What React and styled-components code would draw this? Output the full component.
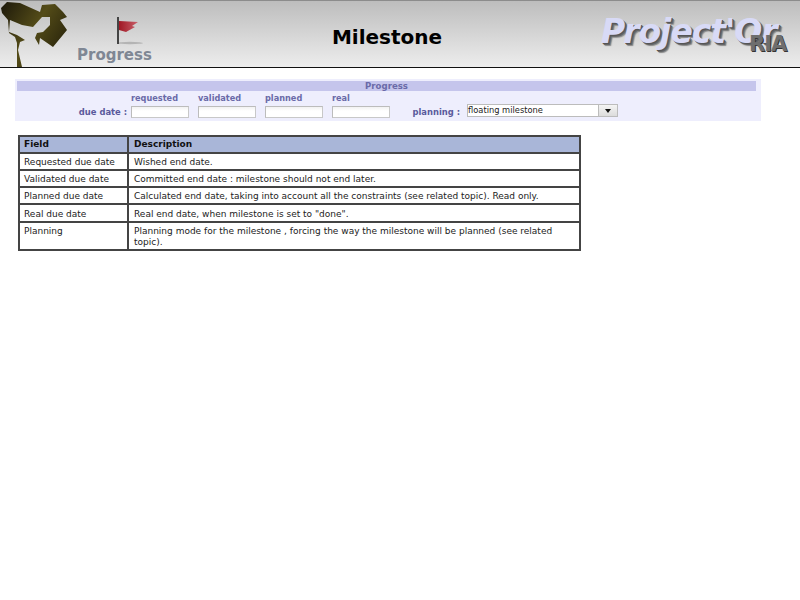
import React from "react";
import styled, { createGlobalStyle } from "styled-components";

const Global = createGlobalStyle`
  html, body { margin: 0; padding: 0; background: #fff; }
  body { font-family: "DejaVu Sans", Verdana, sans-serif; }
`;
const Page = styled.div`
  width: 800px; height: 600px; overflow: hidden; display: flex; flex-direction: column;
`;
const Header = styled.header`
  height: 66px; box-sizing: content-box; flex: none;
  border-top: 1px solid #8c8c8c; border-bottom: 1px solid #111;
  display: grid; grid-template-columns: 70px 100px 1fr 210px;
  background: linear-gradient(#bdbdbd, #ededed);
`;
const Camera = styled.svg` width: 70px; height: 67px; display: block; margin-top: -1px; `;
const Section = styled.div`
  display: flex; flex-direction: column; align-items: flex-start;
`;
const FlagIcon = styled.svg` width: 30px; height: 30px; margin-top: 14px; margin-left: 46px; display: block; `;
const SectionName = styled.div`
  font: bold 15px "DejaVu Sans", sans-serif; color: #7f8794; line-height: 17px; margin: 2px 0 0 7px;
`;
const Title = styled.h1`
  margin: 0; text-align: center; font: bold 20px "DejaVu Sans", sans-serif; color: #000;
  line-height: 26px; padding-top: 23px; padding-left: 14px;
`;
const Logo = styled.div`
  position: relative; padding: 11px 0 0 11px;
`;
const LogoMain = styled.div`
  font: italic bold 33px "DejaVu Sans", sans-serif; letter-spacing: -1px; line-height: 40px;
  color: #d8daf6;
  text-shadow: 1px 1px 0 #555, 2px 2px 0 #666, 3px 3px 1px #888; white-space: nowrap;
`;
const LogoBadge = styled.div`
  position: absolute; left: 159px; top: 32px; font: bold 21px "DejaVu Sans", sans-serif; color: #6e6e6e;
  letter-spacing: -1px; text-shadow: 1px 1px 0 #333; line-height: 22px;
`;
const Panel = styled.section`
  margin: 11px 0 0 15px; width: 746px; height: 42px; box-sizing: border-box; background: #eeeefd; padding-top: 2px; padding-left: 2px;
`;
const PanelTitle = styled.div`
  width: 739px; height: 10px; background: #c5c5ec; color: #6a6aa8; text-align: center;
  font: bold 8.6px/11px "DejaVu Sans", sans-serif;
`;
const FormRow = styled.div`
  display: flex; align-items: flex-start; padding-top: 1px;
`;
const RowLabel = styled.label`
  width: 110px; padding-top: 15px; text-align: right; color: #5a5a9c; font: bold 8.4px/11px "DejaVu Sans", sans-serif; white-space: nowrap;
`;
const DateCol = styled.div`
  width: 67px; margin-left: ${p => p.$first ? "4px" : "0"};
`;
const DateHead = styled.div`
  color: #6a6aa8; font: bold 8.2px/12px "DejaVu Sans", sans-serif; height: 12px;
`;
const DateInput = styled.div`
  width: 56px; height: 10px; background: linear-gradient(#f2f2f2, #fff 40%); border: 1px solid #bcbcbc; border-right-color: #c8c8c8; border-bottom-color: #c8c8c8; margin-top: 2px; box-sizing: content-box;
`;
const PlanLabel = styled(RowLabel)`
  width: 61px; margin-right: 7px;
`;
const Select = styled.div`
  margin-top: 12px; width: 149px; height: 11px; display: flex; border: 1px solid #bcbcbc; background: #fff; font: 8.3px/11px "DejaVu Sans", sans-serif; color: #222;
`;
const SelectText = styled.div` flex: 1; `;
const SelectBtn = styled.div`
  width: 18px; border-left: 1px solid #bcbcbc; background: linear-gradient(#f4f4f4, #dcdcdc); display: flex; align-items: center; justify-content: center;
`;
const Arrow = styled.div`
  width: 0; height: 0; border-left: 3px solid transparent; border-right: 3px solid transparent; border-top: 4px solid #111;
`;
const Table = styled.table`
  margin: 14px 0 0 18px; width: 563px; border-collapse: collapse; table-layout: fixed;
  font: 9px/11px "DejaVu Sans", sans-serif; color: #222; border: 2px solid #444;
`;
const Th = styled.th`
  background: #a9b6d8; border: 2px solid #444; text-align: left; font-weight: bold; height: 15px; padding: 0 0 0 4px; width: ${p => p.$w || "auto"}; color: #111;
  &:nth-child(2) { padding-left: 5px; }
`;
const Td = styled.td`
  border: 2px solid #444; padding: ${p => p.$tall ? "4px" : "3px"} 5px 1px 4px; vertical-align: top; background: #fff;
  &:nth-child(2) { padding-left: 5px; }
`;

const rows = [
  ["Requested due date", "Wished end date."],
  ["Validated due date", "Committed end date : milestone should not end later."],
  ["Planned due date", "Calculated end date, taking into account all the constraints (see related topic). Read only."],
  ["Real due date", 'Real end date, when milestone is set to "done".', true],
  ["Planning", "Planning mode for the milestone , forcing the way the milestone will be planned (see related topic)."],
];

export default function App() {
  return (
    <Page>
      <Global />
      <Header>
        <Camera viewBox="0 0 70 67">
          <defs>
            <linearGradient id="cam" x1="0" x2="1" y1="0" y2="0.6">
              <stop offset="0" stopColor="#1c180a" />
              <stop offset="0.55" stopColor="#544c18" />
              <stop offset="1" stopColor="#2b260c" />
            </linearGradient>
          </defs>
          <path fill="url(#cam)" d="M1 8 L7 2 L20 3 L40 12 L42 5 L55 4 L63 12 L67 17 L60 20 L67 30 L53 47 L40 38 L39 45 L35 38 L37 33 L43 32 L50 25 L50 17 L42 17 L33 27 L22 25 L10 20 L9 32 L17 35 L25 40 L20 42 L18 50 L22 67 L17 67 L17 43 L15 37 L9 33 L8 20 L2 13 Z" />
        </Camera>
        <Section>
          <FlagIcon viewBox="0 0 30 30">
            <defs>
              <linearGradient id="flag" x1="0" x2="1">
                <stop offset="0" stopColor="#a01824" />
                <stop offset="1" stopColor="#c8606a" />
              </linearGradient>
            </defs>
            <ellipse cx="14" cy="28" rx="13" ry="1.2" fill="#999" opacity=".6" />
            <rect x="1" y="2" width="2" height="27" fill="#444" />
            <path d="M3 6 L22 7 L16 11 L19 12 L10 17 L3 15 Z" fill="url(#flag)" />
          </FlagIcon>
          <SectionName>Progress</SectionName>
        </Section>
        <Title>Milestone</Title>
        <Logo>
          <LogoMain>Project'Or</LogoMain>
          <LogoBadge>RIA</LogoBadge>
        </Logo>
      </Header>
      <Panel>
        <PanelTitle>Progress</PanelTitle>
        <FormRow>
          <RowLabel>due date :</RowLabel>
          {["requested", "validated", "planned", "real"].map((n, i) => (
            <DateCol key={n} $first={i === 0}>
              <DateHead>{n}</DateHead>
              <DateInput />
            </DateCol>
          ))}
          <PlanLabel>planning :</PlanLabel>
          <Select>
            <SelectText>floating milestone</SelectText>
            <SelectBtn><Arrow /></SelectBtn>
          </Select>
        </FormRow>
      </Panel>
      <Table>
        <thead>
          <tr><Th $w="103px">Field</Th><Th>Description</Th></tr>
        </thead>
        <tbody>
          {rows.map(([a, b, tall]) => (
            <tr key={a}><Td $tall={tall}>{a}</Td><Td $tall={tall}>{b}</Td></tr>
          ))}
        </tbody>
      </Table>
    </Page>
  );
}
